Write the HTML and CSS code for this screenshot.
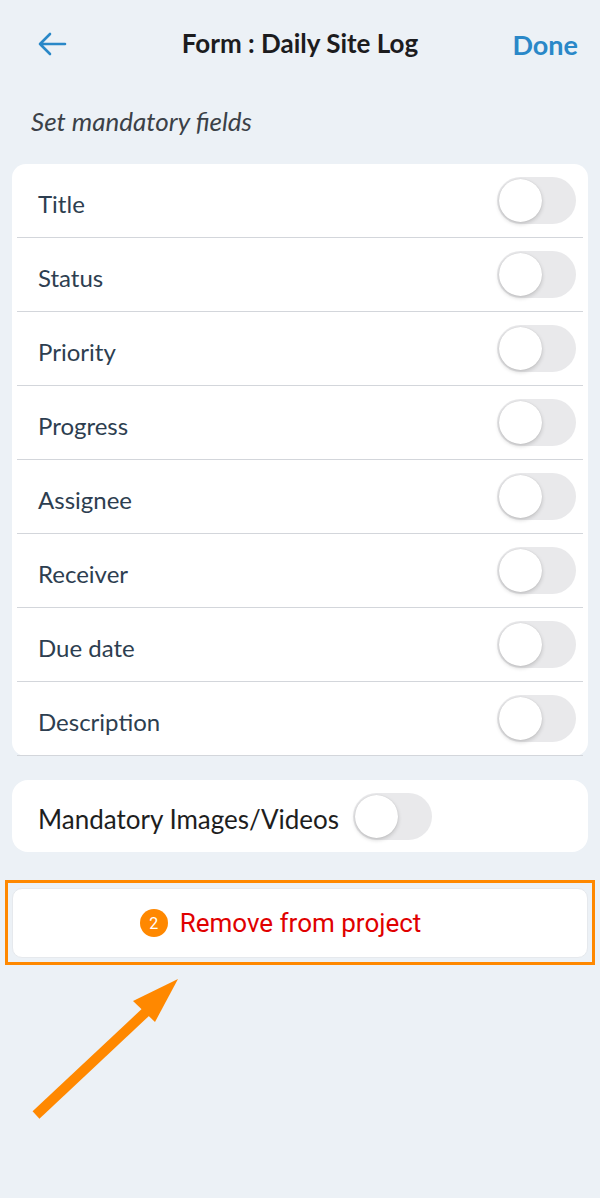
FILE: index.html
```html
<!DOCTYPE html>
<html>
<head>
<meta charset="utf-8">
<link rel="stylesheet" href="styles.css">
</head>
<body>
<div class="page">
  <header class="header">
    <span class="back">
      <svg width="30" height="24" viewBox="0 0 30 24"><path d="M28 12H3M13 2L3 12l10 10" fill="none" stroke="#2a88c8" stroke-width="2.6" stroke-linecap="round" stroke-linejoin="round"/></svg>
    </span>
    <h1 class="title">Form : Daily Site Log</h1>
    <span class="done">Done</span>
  </header>
  <div class="subtitle">Set mandatory fields</div>
  <div class="content">
    <div class="card list">
      <div class="row"><span class="label">Title</span><span class="toggle"><span class="knob"></span></span></div>
      <div class="row"><span class="label">Status</span><span class="toggle"><span class="knob"></span></span></div>
      <div class="row"><span class="label">Priority</span><span class="toggle"><span class="knob"></span></span></div>
      <div class="row"><span class="label">Progress</span><span class="toggle"><span class="knob"></span></span></div>
      <div class="row"><span class="label">Assignee</span><span class="toggle"><span class="knob"></span></span></div>
      <div class="row"><span class="label">Receiver</span><span class="toggle"><span class="knob"></span></span></div>
      <div class="row"><span class="label">Due date</span><span class="toggle"><span class="knob"></span></span></div>
      <div class="row"><span class="label">Description</span><span class="toggle"><span class="knob"></span></span></div>
    </div>
    <div class="card media">
      <span class="label">Mandatory Images/Videos</span><span class="toggle"><span class="knob"></span></span>
    </div>
  </div>
  <div class="highlight">
    <div class="remove">
      <span class="badge">2</span><span class="remove-text">Remove from project</span>
    </div>
  </div>
  <svg class="arrow" width="600" height="1198" viewBox="0 0 600 1198">
    <line x1="36" y1="1115" x2="148" y2="1010" stroke="#ff8800" stroke-width="10"/>
    <polygon points="178,979 133,1001 155,1022" fill="#ff8800"/>
  </svg>
</div>
</body>
</html>
```

FILE: styles.css
```css
html, body {
  margin: 0;
  padding: 0;
  background: #ecf1f6;
}
body {
  font-family: Lato, "Open Sans", sans-serif;
  color: #2d3e50;
}
.page {
  position: relative;
  width: 600px;
  height: 1198px;
  overflow: hidden;
}
.header {
  height: 88px;
  display: flex;
  align-items: center;
  justify-content: space-between;
  padding: 0 22px 0 37px;
  position: relative;
}
.back {
  display: flex;
  width: 30px;
  height: 24px;
}
.title {
  position: absolute;
  left: 0;
  right: 0;
  text-align: center;
  margin: 0 0 2px 0;
  font-size: 26px;
  font-weight: 700;
  color: #1c1c1e;
  pointer-events: none;
}
.done {
  font-size: 27px;
  font-weight: 700;
  color: #2a88c8;
}
.subtitle {
  font-style: italic;
  font-size: 26px;
  color: #3b4148;
  padding: 17px 0 0 31px;
  height: 76px;
  box-sizing: border-box;
}
.content {
  padding: 0 12px;
}
.card {
  background: #fff;
  border-radius: 14px;
}
.row {
  height: 74px;
  box-sizing: border-box;
  display: flex;
  align-items: center;
  justify-content: space-between;
  border-bottom: 1px solid #d3d6db;
  margin: 0 5px;
  padding-left: 21px;
  padding-right: 7px;
}
.label {
  font-size: 24px;
  color: #2d3e50;
  padding-top: 5px;
}
.toggle {
  position: relative;
  width: 79px;
  height: 47px;
  border-radius: 24px;
  background: #e9e9eb;
  flex: none;
}
.knob {
  position: absolute;
  left: 2px;
  top: 2px;
  width: 43px;
  height: 43px;
  border-radius: 50%;
  background: #fff;
  box-shadow: 0 2px 4px rgba(0,0,0,0.18), 0 0 1px rgba(0,0,0,0.15);
}
.media {
  margin-top: 24px;
  height: 72px;
  display: flex;
  align-items: center;
  gap: 14px;
  padding-left: 26px;
  border-radius: 16px;
}
.media .label {
  font-size: 26px;
  color: #1e1e1e;
}
.highlight {
  margin: 28px 5px 0 5px;
  border: 3px solid #ff8800;
  padding: 5px 4px 4px 4px;
}
.remove {
  height: 70px;
  box-sizing: border-box;
  background: #fff;
  border: 1px solid #e6e9ed;
  border-radius: 10px;
  display: flex;
  align-items: center;
  justify-content: center;
  gap: 12px;
}
.badge {
  width: 28px;
  height: 28px;
  border-radius: 50%;
  background: #ff8800;
  color: #fff;
  font-family: Roboto, sans-serif;
  font-size: 16px;
  display: flex;
  align-items: center;
  justify-content: center;
}
.remove-text {
  font-family: Roboto, sans-serif;
  font-size: 26px;
  color: #e00000;
  margin-right: 39px;
}
.arrow {
  position: absolute;
  left: 0;
  top: 0;
  pointer-events: none;
}
```
